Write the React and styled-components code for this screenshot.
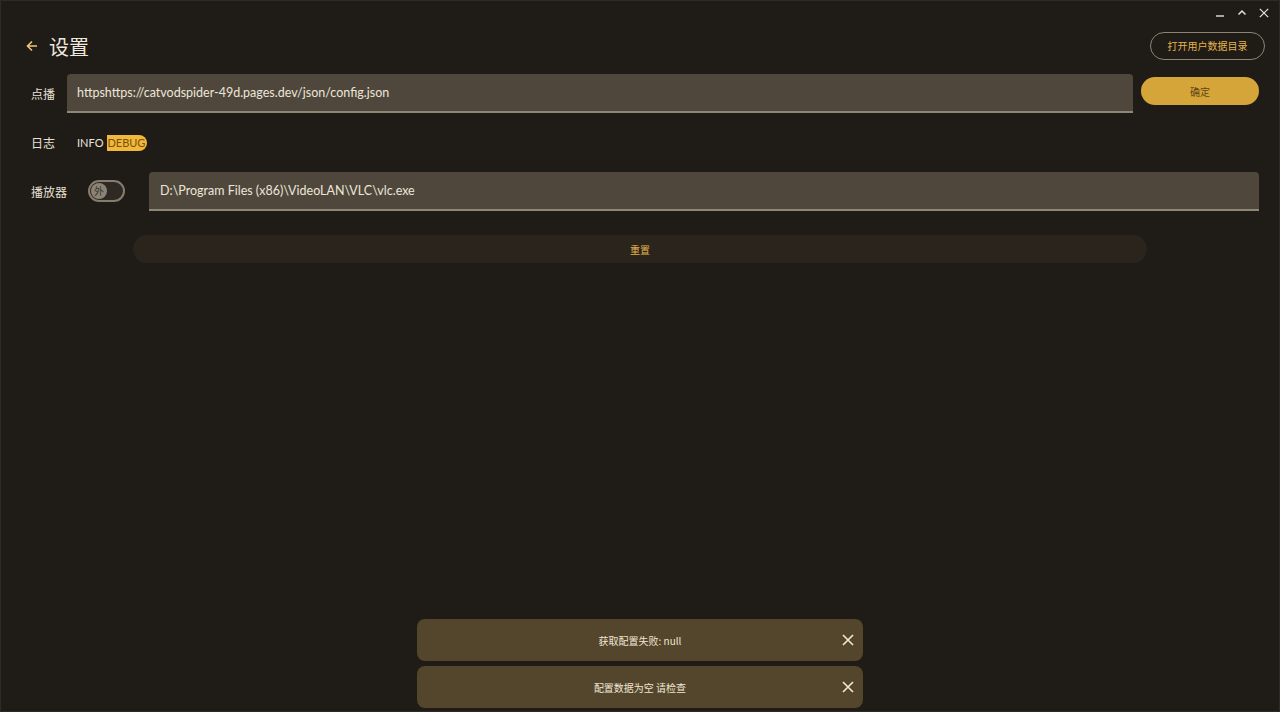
import React from 'react';
import styled, { createGlobalStyle } from 'styled-components';

const GlobalStyle = createGlobalStyle`
  html, body {
    margin: 0;
    padding: 0;
    background: #1f1b17;
  }
  body {
    font-family: Lato, "Noto Sans CJK SC", sans-serif;
    color: #e8e1d4;
  }
`;

const Window = styled.div`
  position: relative;
  width: 1280px;
  height: 712px;
  box-sizing: border-box;
  border: 1px solid #2e2a25;
  background: #1f1b17;
  overflow: hidden;
`;

const TitleBar = styled.div`
  height: 24px;
  display: flex;
  justify-content: flex-end;
  align-items: center;
  gap: 4px;
  padding-right: 6px;
`;

const WinButton = styled.div`
  width: 18px;
  height: 22px;
  display: flex;
  align-items: center;
  justify-content: center;
  color: #e6e0d6;
`;

const Header = styled.div`
  display: flex;
  align-items: center;
  justify-content: space-between;
  padding: 4px 14px 0 24px;
  height: 34px;
`;

const TitleWrap = styled.div`
  display: flex;
  align-items: center;
  gap: 10px;
`;

const Title = styled.div`
  font-size: 20px;
  color: #eee8de;
  font-family: "Noto Sans CJK SC", sans-serif;
`;

const OutlineButton = styled.button`
  width: 115px;
  height: 28px;
  margin-top: -1px;
  padding: 0;
  border: 1px solid #8d8574;
  border-radius: 14px;
  background: transparent;
  color: #e3b54c;
  font-size: 10px;
  font-family: "Noto Sans CJK SC", sans-serif;
`;

const Content = styled.div`
  padding: 10px 20px 0 30px;
  display: flex;
  flex-direction: column;
`;

const Row = styled.div`
  display: flex;
  align-items: center;
  height: ${({ h }) => h}px;
  margin-bottom: ${({ mb }) => mb || 0}px;
`;

const Label = styled.div`
  width: ${({ w }) => w}px;
  flex-shrink: 0;
  font-size: 12px;
  color: #e8e1d4;
  font-family: "Noto Sans CJK SC", sans-serif;
`;

const Field = styled.div`
  flex: 1;
  height: 39px;
  box-sizing: border-box;
  background: #4f473b;
  border-radius: 4px 4px 0 0;
  border-bottom: 2px solid #8e8775;
  display: flex;
  align-items: center;
  padding-left: ${({ pl }) => pl}px;
  font-size: 12.5px;
  color: #ece6da;
  font-family: Lato, "Noto Sans CJK SC", sans-serif;
`;

const GoldButton = styled.button`
  width: 118px;
  height: 28px;
  margin-left: 8px;
  margin-top: -4px;
  border: none;
  border-radius: 14px;
  background: #d6a539;
  color: #5c4418;
  font-size: 10px;
  font-family: "Noto Sans CJK SC", sans-serif;
`;

const Levels = styled.div`
  display: flex;
  align-items: center;
  gap: 4px;
  margin-top: 2px;
  font-size: 11px;
  font-family: Lato, sans-serif;
`;

const Level = styled.span`
  color: ${({ active }) => (active ? '#7a4f0c' : '#ece6da')};
  background: ${({ active }) => (active ? '#f1b93b' : 'transparent')};
  border-radius: ${({ active }) => (active ? '0 8px 8px 0' : '0')};
  padding: ${({ active }) => (active ? '1px 2px 1px 0' : '1px 0')};
  line-height: 14px;
`;

const Switch = styled.div`
  width: 37px;
  height: 22px;
  box-sizing: border-box;
  border: 2px solid #857c6c;
  border-radius: 11px;
  background: #2e2922;
  display: flex;
  align-items: center;
  padding-left: 1px;
  margin-right: 24px;
`;

const Thumb = styled.div`
  width: 16px;
  height: 16px;
  border-radius: 50%;
  background: #8b8476;
  color: #3b362d;
  font-size: 10px;
  line-height: 16px;
  text-align: center;
  font-family: "Noto Sans CJK SC", sans-serif;
`;

const ResetWrap = styled.div`
  display: flex;
  justify-content: center;
  padding: 24px 0 0;
  margin-left: -30px;
  margin-right: -20px;
`;

const ResetButton = styled.button`
  width: 1014px;
  height: 28px;
  border: none;
  border-radius: 14px;
  background: #2b241c;
  color: #e0b247;
  font-size: 10px;
  font-family: "Noto Sans CJK SC", sans-serif;
`;

const Toasts = styled.div`
  position: absolute;
  left: 416px;
  bottom: 3px;
  width: 446px;
  display: flex;
  flex-direction: column;
  gap: 5px;
`;

const Toast = styled.div`
  position: relative;
  height: 42px;
  border-radius: 8px;
  background: #54462c;
  display: flex;
  align-items: center;
  justify-content: center;
  color: #efe5d2;
  font-size: 10px;
  font-family: "Noto Sans CJK SC", sans-serif;
`;

const ToastClose = styled.div`
  position: absolute;
  right: 9px;
  top: 50%;
  transform: translateY(-50%);
  display: flex;
  color: #f0e8da;
`;

const Cross = ({ size = 12, w = 1.6 }) => (
  <svg width={size} height={size} viewBox="0 0 12 12">
    <path d="M1 1 L11 11 M11 1 L1 11" stroke="currentColor" strokeWidth={w} fill="none" />
  </svg>
);

export default function App() {
  return (
    <>
      <GlobalStyle />
      <Window>
        <TitleBar>
          <WinButton>
            <svg width="10" height="10" viewBox="0 0 10 10">
              <path d="M1 8 H9" stroke="currentColor" strokeWidth="1.4" />
            </svg>
          </WinButton>
          <WinButton>
            <svg width="10" height="10" viewBox="0 0 10 10">
              <path d="M1.5 6.5 L5 3 L8.5 6.5" stroke="currentColor" strokeWidth="1.5" fill="none" />
            </svg>
          </WinButton>
          <WinButton>
            <Cross size={10} w={1.5} />
          </WinButton>
        </TitleBar>
        <Header>
          <TitleWrap>
            <svg width="14" height="14" viewBox="0 0 14 14">
              <path d="M12 7 H2.5 M7 2.5 L2.5 7 L7 11.5" stroke="#efc57a" strokeWidth="1.6" fill="none" />
            </svg>
            <Title>设置</Title>
          </TitleWrap>
          <OutlineButton>打开用户数据目录</OutlineButton>
        </Header>
        <Content>
          <Row h={40} mb={10}>
            <Label w={36}>点播</Label>
            <Field pl={10}>httpshttps://catvodspider-49d.pages.dev/json/config.json</Field>
            <GoldButton>确定</GoldButton>
          </Row>
          <Row h={38} mb={10}>
            <Label w={46}>日志</Label>
            <Levels>
              <Level>INFO</Level>
              <Level active>DEBUG</Level>
            </Levels>
          </Row>
          <Row h={40}>
            <Label w={57}>播放器</Label>
            <Switch>
              <Thumb>外</Thumb>
            </Switch>
            <Field pl={11}>D:\Program Files (x86)\VideoLAN\VLC\vlc.exe</Field>
          </Row>
          <ResetWrap>
            <ResetButton>重置</ResetButton>
          </ResetWrap>
        </Content>
        <Toasts>
          <Toast>
            获取配置失败: null
            <ToastClose><Cross /></ToastClose>
          </Toast>
          <Toast>
            配置数据为空 请检查
            <ToastClose><Cross /></ToastClose>
          </Toast>
        </Toasts>
      </Window>
    </>
  );
}
